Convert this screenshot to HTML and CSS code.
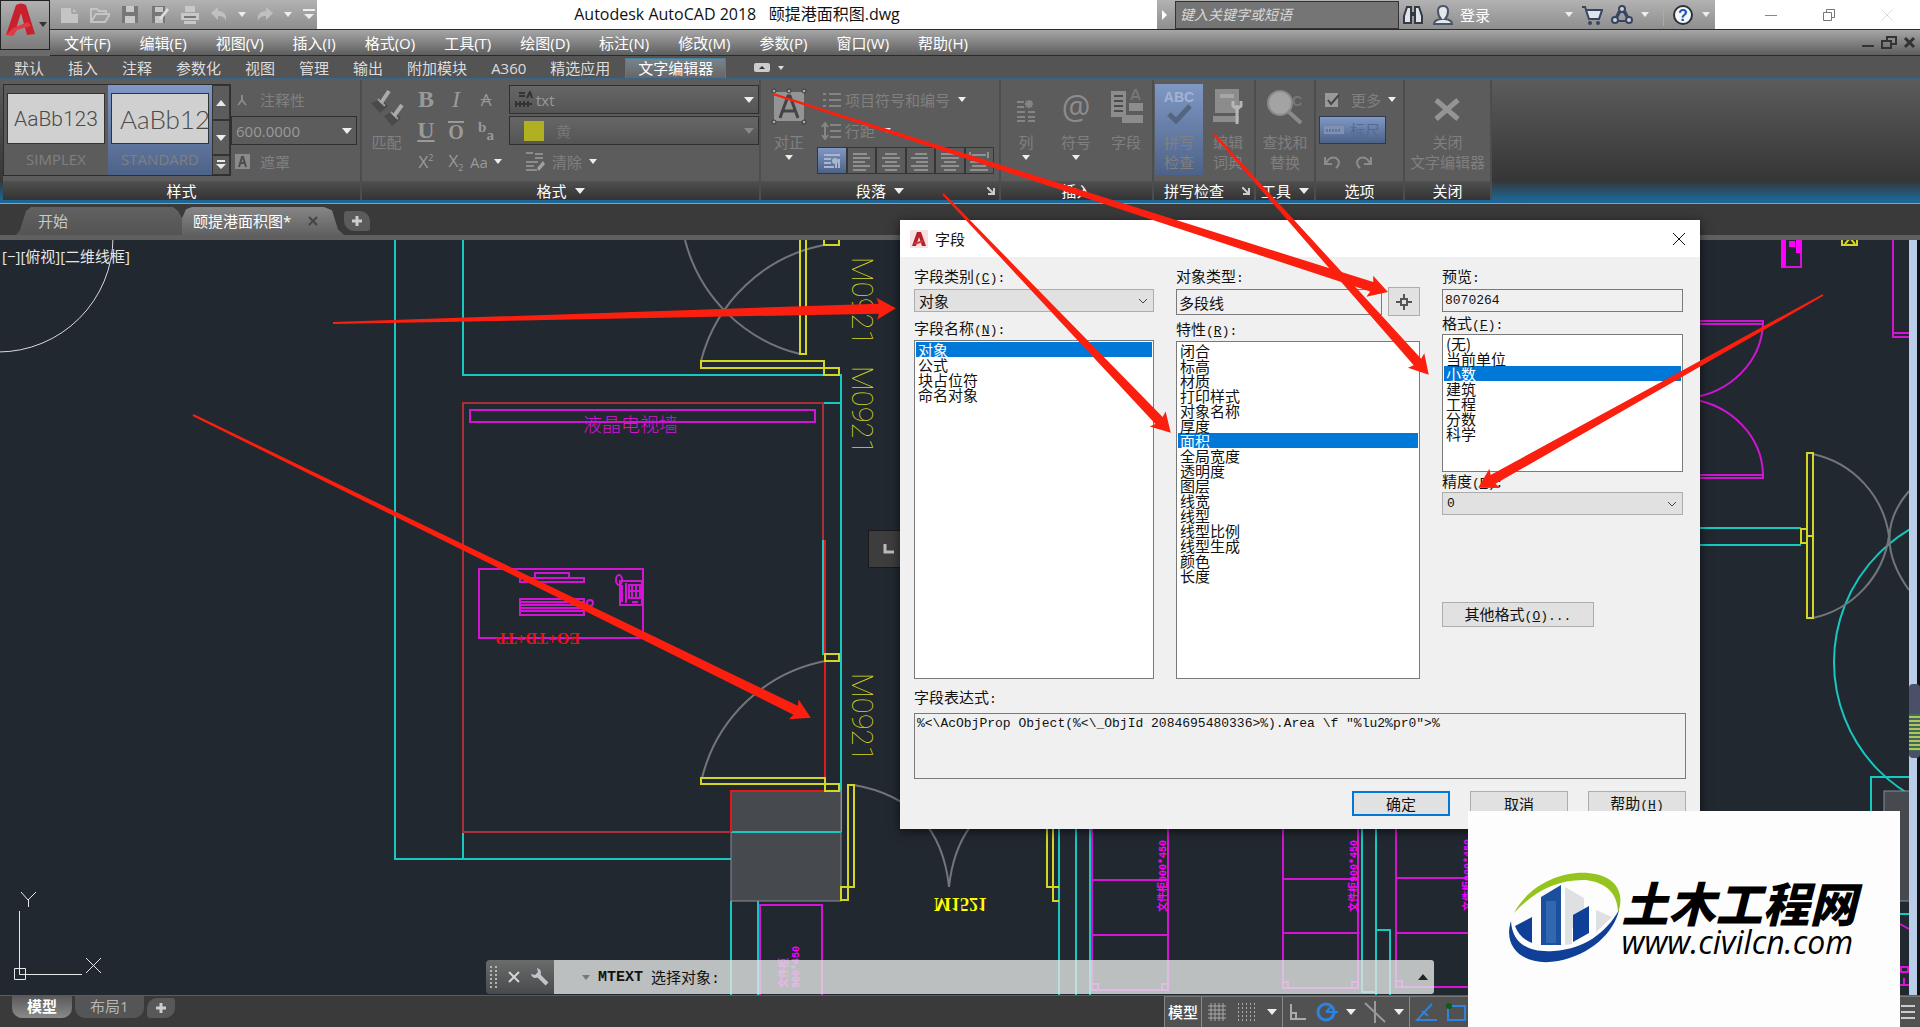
FILE: index.html
```html
<!DOCTYPE html>
<html lang="zh-CN">
<head>
  <meta charset="UTF-8" />
  <meta name="viewport" content="width=device-width, initial-scale=1.0"/>
  <title>Autodesk AutoCAD 2018 颐提港面积图.dwg</title>
  <link rel="stylesheet" href="styles.css">
</head>
<body>
  <header class="top">
    <button class="app-button" aria-label="应用程序菜单">
      <svg width="48" height="48" viewBox="0 0 48 48">
        <path d="M5 34 L15 4 Q20 1 25 4 L34 33 L26 34 L20 12 L13 34 Z" fill="#c8202c"/>
        <path d="M5 34 L12 27 L27 21 L30 25 L16 29 L12 35 Z" fill="#e23a44"/>
        <path d="M38 21h8l-4 5z" fill="#333"/>
      </svg>
    </button>
    <div class="top-rows">
      <div class="titlebar">
        <div class="quick">
          <button aria-label="新建"><svg width="20" height="20"><path d="M1 3h11l6 5v10H1z" fill="#c4c4c4"/><path d="M12 3v5h6" fill="none" stroke="#8a8a8a"/></svg></button>
          <button aria-label="打开"><svg width="20" height="20"><path d="M1 17V4h6l2 2h7v4M1 17l5-8h14l-5 8z" fill="none" stroke="#c4c4c4" stroke-width="2"/></svg></button>
          <button aria-label="保存"><svg width="20" height="20"><path d="M2 1h16v17H2z" fill="#777"/><path d="M6 1h8v6H6zM5 11h10v7H5z" fill="#c8c8c8"/></svg></button>
          <button aria-label="另存为"><svg width="20" height="20"><path d="M2 1h13v17H2z" fill="#777"/><path d="M5 2h8v5H5zM5 11h8v7H5z" fill="#c8c8c8"/><path d="M9 13l8-10 2 2-8 10z" fill="#ddd"/></svg></button>
          <button aria-label="打印"><svg width="20" height="20"><path d="M5 1h10v6H5zM1 8h18v7H1zM4 16h12v3H4z" fill="#c8c8c8"/><path d="M4 12h12" stroke="#777" stroke-width="2"/></svg></button>
          <button aria-label="放弃"><svg width="18" height="20"><path d="M1 8l7-6v4c6 0 9 4 8 10-1-4-4-5-8-5v4z" fill="#c0c0c0"/></svg></button>
          <i class="caret"></i>
          <button aria-label="重做"><svg width="18" height="20"><path d="M17 8l-7-6v4C4 6 1 10 2 16c1-4 4-5 8-5v4z" fill="#c0c0c0"/></svg></button>
          <i class="caret"></i>
          <button aria-label="自定义"><svg width="14" height="16"><path d="M1 2h12v2H1zM2 7h10l-5 5z" fill="#eee"/></svg></button>
        </div>
        <h1>Autodesk AutoCAD 2018&nbsp;&nbsp; 颐提港面积图.dwg</h1>
        <div class="infocenter">
          <i class="caret-right"></i>
          <input type="text" placeholder="键入关键字或短语" aria-label="搜索">
          <button aria-label="查找"><svg width="22" height="22"><path d="M2 12l3-9h4v16H2zM20 12l-3-9h-4v16h7z" fill="#dfe5ea" stroke="#333a44" stroke-width="2"/><path d="M9 8h4v4H9z" fill="#333a44"/></svg></button>
          <button class="login"><svg width="22" height="22"><path d="M2 20q0-4 7-5-3-3-3-8 0-5 5-5t5 5q0 5-3 8 7 1 7 5z" fill="#e4e9f0" stroke="#4b5465" stroke-width="2"/></svg>登录</button>
          <i class="caret"></i>
          <button aria-label="商店"><svg width="22" height="22"><path d="M1 3h3l4 12h10l3-9H6" fill="#dfe5ef" stroke="#39455f" stroke-width="2"/><circle cx="9" cy="19" r="2" fill="#39455f"/><circle cx="17" cy="19" r="2" fill="#39455f"/></svg></button>
          <button aria-label="保持连接"><svg width="22" height="22"><path d="M11 5L4 17h14z" fill="none" stroke="#39455f" stroke-width="2"/><g fill="#c9d2e2" stroke="#39455f" stroke-width="2"><path d="M8 7L5 13M14 7l3 6M8 17h6"/><circle cx="11" cy="5" r="3"/><circle cx="4" cy="16" r="3"/><circle cx="18" cy="16" r="3"/></g></svg></button>
          <i class="caret"></i>
          <span class="divider"></span>
          <button aria-label="帮助"><svg width="22" height="22"><circle cx="11" cy="11" r="9" fill="#f5f7fb" stroke="#2b3038" stroke-width="2"/><text x="11" y="17" text-anchor="middle" class="help-mark">?</text></svg></button>
          <i class="caret"></i>
        </div>
        <div class="window-buttons">
          <button aria-label="最小化"><svg width="14" height="14"><path d="M1 7.5h12" stroke="#888"/></svg></button>
          <button aria-label="还原"><svg width="14" height="14"><path d="M1.5 4.5h8v8h-8zM4.500 4v-2.500h8v8H10" fill="none" stroke="#777"/></svg></button>
          <button aria-label="关闭"><svg width="14" height="14"><path d="M1 1l12 12M13 1L1 13" stroke="#ddd"/></svg></button>
        </div>
      </div>
      <nav class="menubar">
        <a href="#">文件(F)</a>
        <a href="#">编辑(E)</a>
        <a href="#">视图(V)</a>
        <a href="#">插入(I)</a>
        <a href="#">格式(O)</a>
        <a href="#">工具(T)</a>
        <a href="#">绘图(D)</a>
        <a href="#">标注(N)</a>
        <a href="#">修改(M)</a>
        <a href="#">参数(P)</a>
        <a href="#">窗口(W)</a>
        <a href="#">帮助(H)</a>
        <svg class="doc-buttons" width="56" height="18"><path d="M2 12h12" stroke="#333" stroke-width="2"/><path d="M22 7h9v7h-9zM27 7V3h9v7h-5" fill="none" stroke="#333" stroke-width="2"/><path d="M45 4l9 9M54 4l-9 9" stroke="#333" stroke-width="3"/></svg>
      </nav>
    </div>
  </header>

  <nav class="ribbon-tabs">
    <a href="#">默认</a>
    <a href="#">插入</a>
    <a href="#">注释</a>
    <a href="#">参数化</a>
    <a href="#">视图</a>
    <a href="#">管理</a>
    <a href="#">输出</a>
    <a href="#">附加模块</a>
    <a href="#">A360</a>
    <a href="#">精选应用</a>
    <a href="#" class="active">文字编辑器</a>
    <button class="ribbon-toggle" aria-label="最小化功能区"><svg width="32" height="12"><rect width="16" height="9" y="1" rx="2" fill="#ccc"/><path d="M5 7h6L8 4z" fill="#333"/><path d="M24 4h6l-3 4z" fill="#ddd"/></svg></button>
  </nav>

  <section class="ribbon">
    <div class="panel style-panel">
      <div class="panel-body">
        <div class="gallery">
          <button class="cell"><span class="sample">AaBb123</span>SIMPLEX</button>
          <button class="cell selected"><span class="sample wide">AaBb123</span>STANDARD</button>
          <div class="gallery-scroll">
            <button aria-label="上"><svg width="10" height="6"><path d="M0 6h10L5 0z" fill="#e8e8e8"/></svg></button>
            <button aria-label="下"><i class="caret big"></i></button>
            <button aria-label="展开"><svg width="10" height="10"><path d="M1 0h8v2H1zM0 4h10L5 9z" fill="#e8e8e8"/></svg></button>
          </div>
        </div>
        <div class="rows">
          <div class="row"><svg width="22" height="16"><path d="M11 3v5M11 8l-4 5M11 8l4 5" stroke="#8a8a8a" stroke-width="2"/></svg>注释性</div>
          <div class="row"><span class="combo">600.0000<i class="caret big"></i></span></div>
          <div class="row"><svg width="22" height="18"><rect x="4" y="1" width="15" height="15" fill="#8a8a8a"/><path d="M8 14l3-10h1l3 10M9 10h5" stroke="#4c4c4c" stroke-width="2" fill="none"/></svg>遮罩</div>
        </div>
      </div>
      <h2>样式</h2>
    </div>

    <div class="panel format-panel">
      <div class="panel-body">
        <button class="large"><svg width="36" height="38"><path d="M2 15l9 10 8-7-7-7zM15 28l8 10 9-8-8-7z" fill="#4a4a4a"/><path d="M9 11l7 7M22 24l7 7" stroke="#999" stroke-width="2"/><path d="M12 15l8-12M25 28l8-11" stroke="#aaa" stroke-width="4"/></svg>匹配</button>
        <div class="glyphs">
          <b>B</b><em>I</em><s>A</s>
          <u>U</u><span class="over">O</span><span class="frac"><b>b</b><b>a</b></span>
          <span>X<sup>2</sup></span><span>X<sub>2</sub></span><span class="case">Aa<i class="caret"></i></span>
        </div>
        <div class="rows grow">
          <div class="row"><span class="combo font-combo"><svg width="20" height="18"><path d="M5 2h6M5 5h6M13 7l3-6 2 6M2 10v6M6 10v6M10 10v6M2 13h16M14 10v6" stroke="#333" stroke-width="2" fill="none"/></svg>txt<i class="caret big"></i></span></div>
          <div class="row"><span class="combo dim"><i class="swatch"></i>黄<i class="caret big"></i></span></div>
          <div class="row clear"><svg width="20" height="20"><path d="M1 1h7M10 2h8M10 6h8M1 10h12M1 14h8M1 18h11" stroke="#8c8c8c" stroke-width="2"/><path d="M12 16l6-7 2 3-6 7z" fill="#a0a0a0"/></svg>清除<i class="caret"></i></div>
        </div>
      </div>
      <h2>格式<i class="caret big"></i></h2>
    </div>

    <div class="panel para-panel">
      <div class="panel-body">
        <button class="large"><svg width="36" height="38"><rect x="3" y="4" width="30" height="29" fill="#949494"/><path d="M9 30L17 8h2l8 22M12 23h12" stroke="#444" stroke-width="3" fill="none"/><g fill="#aaa" stroke="#333"><circle cx="3" cy="3" r="2"/><circle cx="18" cy="3" r="2"/><circle cx="33" cy="3" r="2"/><circle cx="3" cy="34" r="2"/><circle cx="33" cy="34" r="2"/></g></svg>对正<i class="caret"></i></button>
        <div class="rows grow">
          <div class="row tight"><svg width="28" height="16"><path d="M6 2h3M6 8h3M6 14h3M12 2h12M12 8h12M12 14h12" stroke="#858585" stroke-width="2"/></svg>项目符号和编号<i class="caret"></i></div>
          <div class="row tight"><svg width="28" height="18"><path d="M8 3v12M5 5l3-4 3 4M5 13l3 4 3-4M13 3h11M13 9h11M13 15h11" stroke="#858585" stroke-width="2" fill="none"/></svg>行距<i class="caret"></i></div>
          <div class="align-buttons">
            <button class="selected" aria-label="默认"><svg width="20" height="20"><path d="M2 4h16M2 8h7M2 12h7M2 16h10M14 8v9M17 8v9" stroke="#a9b6cc" stroke-width="2"/><circle cx="13" cy="10" r="3" fill="#a9b6cc"/></svg></button>
            <button aria-label="左对齐"><svg width="20" height="20"><path d="M2 3h14M2 7h17M2 11h12M2 15h17M2 19h13" stroke="#909090" stroke-width="2"/></svg></button>
            <button aria-label="居中"><svg width="20" height="20"><path d="M4 3h12M1 7h18M4 11h12M1 15h18M4 19h12" stroke="#909090" stroke-width="2"/></svg></button>
            <button aria-label="右对齐"><svg width="20" height="20"><path d="M5 3h12M1 7h17M6 11h12M1 15h17M4 19h14" stroke="#909090" stroke-width="2"/></svg></button>
            <button aria-label="对正"><svg width="20" height="20"><path d="M1 3h18M1 7h18M4 11h12M1 15h18M4 19h12" stroke="#909090" stroke-width="2"/></svg></button>
            <button aria-label="分散对齐"><svg width="20" height="20"><path d="M1 1v6M19 1v6M3 4h14M1 11h18M3 15h14M1 19h18" stroke="#909090" stroke-width="2"/></svg></button>
          </div>
        </div>
      </div>
      <h2>段落<i class="caret big"></i><svg class="launcher" width="8" height="8"><path d="M0 0l6 6M7 1v6H1" stroke="#ccc" fill="none" stroke-width="2"/></svg></h2>
    </div>

    <div class="panel insert-panel">
      <div class="panel-body">
        <button class="large"><svg width="20" height="42"><path d="M1 14h7M1 19h7M1 24h8M12 24h7M1 29h8M12 29h7M1 33h8M12 33h7" stroke="#858585" stroke-width="2"/><path d="M13 12v8M9 16h8M10 13l6 6M16 13l-6 6" stroke="#858585" stroke-width="2"/></svg>列<i class="caret"></i></button>
        <button class="large"><span class="at">@</span>符号<i class="caret"></i></button>
        <button class="large"><svg width="36" height="36"><path d="M3 3h15v26H3zM21 15h14v8H21zM14 27h21v8H14z" fill="#8c8c8c"/><path d="M6 8h9M6 13h9M6 18h9M6 23h9" stroke="#4c4c4c" stroke-width="2"/><path d="M23 12l4-10h1l4 10M24 9h7" stroke="#777" stroke-width="2" fill="none"/></svg>字段</button>
      </div>
      <h2>插入</h2>
    </div>

    <div class="panel spell-panel">
      <div class="panel-body">
        <button class="large selected"><svg width="38" height="38"><text x="19" y="14" text-anchor="middle" class="abc">ABC</text><path d="M9 26l7 7 14-15" fill="none" stroke="#55657f" stroke-width="5"/></svg>拼写<br>检查</button>
        <button class="large"><svg width="36" height="38"><path d="M5 1h24v24H5zM3 28h26v6H3z" fill="#8c8c8c"/><path d="M10 8h14" stroke="#a6a6a6" stroke-width="4"/><path d="M27 17v19M23 13v5l4 3 4-3v-5" stroke="#b5b5b5" stroke-width="3" fill="none"/></svg>编辑<br>词典</button>
      </div>
      <h2>拼写检查<svg class="launcher" width="8" height="8"><path d="M0 0l6 6M7 1v6H1" stroke="#ccc" fill="none" stroke-width="2"/></svg></h2>
    </div>

    <div class="panel tools-panel">
      <div class="panel-body">
        <button class="large"><svg width="38" height="38"><text x="26" y="18" text-anchor="middle" class="abc dark">BC</text><circle cx="14" cy="15" r="12" fill="#a3a3a3" stroke="#8a8a8a" stroke-width="2"/><path d="M23 24l12 11" stroke="#8a8a8a" stroke-width="4"/></svg>查找和<br>替换</button>
      </div>
      <h2>工具<i class="caret big"></i></h2>
    </div>

    <div class="panel option-panel">
      <div class="panel-body rows">
        <div class="row"><svg width="26" height="18"><rect x="7" y="2" width="13" height="14" fill="#999"/><path d="M10 9l3 4 8-9" fill="none" stroke="#444" stroke-width="2"/></svg>更多<i class="caret"></i></div>
        <button class="ruler"><svg width="24" height="10"><rect x="2" y="1" width="20" height="8" fill="#8092b3"/><path d="M5 4v3M8 4v3M11 4v3M14 4v3M17 4v3" stroke="#4c5b77"/></svg>标尺</button>
        <div class="row undo"><svg width="18" height="14"><path d="M1 2v7h7M2 8q4-7 10-5 6 4 0 10" fill="none" stroke="#8c8c8c" stroke-width="2"/></svg><svg width="18" height="14"><path d="M17 2v7h-7M16 8q-4-7-10-5-6 4 0 10" fill="none" stroke="#8c8c8c" stroke-width="2"/></svg></div>
      </div>
      <h2>选项</h2>
    </div>

    <div class="panel close-panel">
      <div class="panel-body">
        <button class="large"><svg width="30" height="42"><path d="M3 12l22 19M25 12L3 31" stroke="#949494" stroke-width="5"/></svg>关闭<br>文字编辑器</button>
      </div>
      <h2>关闭</h2>
    </div>
  </section>

  <nav class="file-tabs">
    <a href="#" class="file-tab">开始</a>
    <a href="#" class="file-tab active">颐提港面积图*<svg width="10" height="10"><path d="M1 1l8 8M9 1L1 9" stroke="#444" stroke-width="2"/></svg></a>
    <button class="new-tab" aria-label="新图形"><svg width="12" height="12"><path d="M6 1v10M1 6h10" stroke="#ccc" stroke-width="3"/></svg></button>
  </nav>

  <main class="canvas">
    <svg class="drawing" width="100%" height="100%" fill="none">
      <g transform="translate(0 -240)">
        <!-- left wall and compass -->
        <circle cx="-2" cy="237" r="115" stroke="#d8dadc"/>
        <g stroke="#16c8c0" stroke-width="2">
          <path d="M395 240V859H731M463 240V375H841V832M463 832V859M824 403H841M823 540V655M731 901V996M758 901V996"/>
          <path d="M1059 820V996M1076 820V996M1090 820V996M1362 820V992H1376M1376 820V996M1376 930H1390V996"/>
          <path d="M1690 528H1801M1690 545H1801M1909 777H1871V900M1900 914H1909"/>
          <circle cx="1988" cy="662" r="154"/>
        </g>
        <!-- columns -->
        <rect x="731" y="791" width="110" height="110" fill="#46494d" stroke="#8a8e98"/>
        <rect x="1884" y="791" width="30" height="110" fill="#46494d" stroke="#8a8e98"/>
        <path d="M731 832H841" stroke="#16c8c0" stroke-width="2"/>
        <!-- area polyline -->
        <path d="M731 832H463V403H823V540" stroke="#a83038" stroke-width="2"/>
        <path d="M825 540V791H731V832" stroke="#e01a1a" stroke-width="2"/>
        <!-- door swings -->
        <g stroke="#72757a" stroke-width="2">
          <path d="M685 240A158 158 0 0 0 800 354M701 361A158 158 0 0 1 824 245M702 778A158 158 0 0 1 825 661"/>
          <path d="M854 785Q940 800 949 887Q958 800 1044 785"/>
          <path d="M1813 454A98 98 0 0 1 1889 536A98 98 0 0 1 1813 618M1909 491Q1870 536 1909 590"/>
        </g>
        <g stroke="#d3d622" stroke-width="2">
          <path d="M800 240V354H806V240M824 240V245H839V240M701 361H824V368H701ZM824 368H839V375H824Z"/>
          <path d="M825 654H839V661H825ZM701 778H825V784H701ZM825 784H839V791H825ZM848 785H854V887H841V900H848Z"/>
          <path d="M1047 820V887H1059M1053 820V901H1059M1807 453H1813V618H1807ZM1801 529H1807V543H1801ZM1807 536H1813"/>
          <path d="M1842 236V245H1857V236M1845 244L1850 238L1855 244"/>
        </g>
        <g stroke="#d414d4" stroke-width="2">
          <path d="M470 410H815V422H470ZM479 569H643V638H479ZM535 573H569V578H535ZM520 578H584V582H520Z"/>
          <path d="M520 599H584V615H520ZM520 602H584M520 605H584M520 608H584M520 611H584"/>
          <circle cx="590" cy="603" r="3"/>
          <path d="M620 581H642V605H620ZM629 585H640V598H629ZM632 585V598M636 585V598M629 591H640M622 585V602M626 583V603M632 602H638"/>
          <ellipse cx="619" cy="580" rx="3" ry="5"/>
          <path d="M760 996V905H822V996"/>
          <path d="M1092 820V990H1168V820M1092 880H1168M1092 935H1168M1283 820V988H1358V820M1283 879H1358M1283 933H1358M1480 878H1396V820M1396 878V987H1480M1396 933H1480"/>
          <path d="M1092 984h6v6M1162 990v-6h6M1283 982h5v6M1352 988v-6h6M1396 981h6v6"/>
          <path d="M1690 321H1763V324H1690M1763 324A85 78 0 0 1 1690 398M1690 399A85 78 0 0 1 1763 475M1690 475H1763V478H1690"/>
          <path d="M1893 240V337H1909M1893 333H1909M1782 240V267H1801V240"/>
          <path d="M1900 924L1909 929M1901 967H1908V972H1901ZM1900 985H1909M1904 978V985"/>
        </g>
        <path d="M1781 240h5v27h-5zM1789 241h6v6h-6zM1796 240h6v13h-6z" fill="#f0f"/>
        <!-- labels -->
        <g class="door-label" fill="#d3d622">
          <text transform="translate(852 257) rotate(90)">M0921</text>
          <text transform="translate(852 366) rotate(90)">M0921</text>
          <text transform="translate(852 673) rotate(90)">M0921</text>
        </g>
        <text x="583" y="432" class="wall-label">液晶电视墙</text>
        <text transform="translate(580 633) rotate(180)" class="desk-label">EO+TD+TP</text>
        <text transform="translate(934 898) scale(1 -1)" class="door-small">M1521</text>
        <g class="cabinet">
          <text transform="translate(1166 912) rotate(-90)">文件柜900*450</text>
          <text transform="translate(1357 912) rotate(-90)">文件柜900*450</text>
          <text transform="translate(1471 911) rotate(-90)">文件柜900*450</text>
          <text transform="translate(787 988) rotate(-90)">文件柜</text>
          <text transform="translate(799 988) rotate(-90)">900*450</text>
        </g>
        <!-- UCS icon -->
        <g stroke="#e6e8ea">
          <path d="M19.500 911V974.500H82M14.500 968.500h11v11h-11zM21 892l7 8 8-8M28.500 900v7M86 958l15 15M101 958l-15 15"/>
        </g>
      </g>
    </svg>
    <p class="view-label">[−][俯视][二维线框]</p>
    <div class="nav-strip"><span></span></div>
    <div class="snap-tip"><svg width="12" height="12"><path d="M2 1v8h9" stroke="#bbb" stroke-width="3" fill="none"/></svg></div>
    <div class="command">
      <div class="command-grip">
        <svg width="8" height="22"><path d="M1 0v22M6 0v22" stroke="#b5b5b5" stroke-width="2" stroke-dasharray="2 2"/></svg>
        <svg width="12" height="12"><path d="M1 1l10 10M11 1L1 11" stroke="#d5d5d5" stroke-width="2"/></svg>
        <svg width="20" height="20"><path d="M7 7l10 10" stroke="#c3c3cc" stroke-width="4"/><path d="M7 1a5 5 0 1 1-6 6l4 1 3-3z" fill="#c3c3cc"/></svg>
      </div>
      <div class="command-line">
        <i class="caret dark"></i><b>MTEXT</b><span>选择对象:</span>
        <svg width="10" height="6"><path d="M0 6h10L5 0z" fill="#222"/></svg>
      </div>
    </div>
  </main>

  <footer class="bottom">
    <nav class="layout-tabs">
      <a href="#" class="active">模型</a>
      <a href="#">布局1</a>
      <button aria-label="新建布局"><svg width="12" height="12"><path d="M6 1v10M1 6h10" stroke="#ccc" stroke-width="3"/></svg></button>
    </nav>
    <div class="status">
      <button class="status-model">模型</button>
      <div class="status-group">
        <button aria-label="栅格"><svg width="20" height="20"><path d="M4 1v18M8 1v18M12 1v18M16 1v18M1 4h18M1 8h18M1 12h18M1 16h18" stroke="#aaa"/></svg></button>
        <button aria-label="捕捉"><svg width="20" height="20"><path d="M1 2h18M1 6h18M1 10h18M1 14h18M1 18h18" stroke="#aaa" stroke-width="2" stroke-dasharray="1 3"/></svg></button>
        <i class="caret big"></i>
      </div>
      <div class="status-group">
        <button aria-label="正交"><svg width="20" height="20"><path d="M3 2v15h15M3 11h5v6" stroke="#aaa" fill="none" stroke-width="2"/></svg></button>
        <button aria-label="极轴"><svg width="22" height="20"><circle cx="10" cy="10" r="8" fill="none" stroke="#2d83dd" stroke-width="3"/><path d="M10 10h12M10 10l6-6" stroke="#2d83dd" stroke-width="2"/></svg></button>
        <i class="caret big"></i>
        <button aria-label="等轴测"><svg width="22" height="22"><path d="M11 0v22M1 2l20 19" stroke="#999" stroke-width="2"/></svg></button>
        <i class="caret big"></i>
      </div>
      <div class="status-group">
        <button aria-label="对象捕捉追踪"><svg width="22" height="20"><path d="M17 2L2 18h20M7 9l6 5" stroke="#2d83dd" stroke-width="2" fill="none"/></svg></button>
        <button aria-label="对象捕捉"><svg width="22" height="20"><path d="M3 4h17v14H3z" stroke="#2d83dd" stroke-width="2" fill="none"/><circle cx="4" cy="4" r="3" fill="#0b5d14"/></svg></button>
      </div>
      <button class="burger" aria-label="自定义"><svg width="14" height="16"><path d="M0 2h14M0 8h14M0 14h14" stroke="#ccc" stroke-width="2"/></svg></button>
    </div>
  </footer>

  <form class="dialog">
    <div class="dialog-title">
      <svg width="18" height="18"><rect width="18" height="18" fill="#f6e2e0"/><path d="M2 16L7 2h4l5 14h-4l-3-9-3 9z" fill="#b3202b"/><path d="M4 13l9-3v2l-8 3z" fill="#d83a44"/></svg>
      字段
      <button type="button" aria-label="关闭"><svg width="14" height="14"><path d="M1 1l12 12M13 1L1 13" stroke="#111"/></svg></button>
    </div>
    <div class="dialog-body">
      <div class="columns">
        <div class="column">
          <label for="category">字段类别<span>(<u>C</u>):</span></label>
          <select id="category" class="drop"><option>对象</option></select>
          <label for="names" class="second">字段名称<span>(<u>N</u>):</span></label>
          <select id="names" class="list" size="4">
            <option selected>对象</option>
            <option>公式</option>
            <option>块占位符</option>
            <option>命名对象</option>
          </select>
        </div>
        <div class="column">
          <label for="type">对象类型<span>:</span></label>
          <div class="pick">
            <input id="type" type="text" value="多段线" readonly>
            <button type="button" aria-label="选择对象"><svg width="18" height="18"><path d="M9 1v5M9 12v5M1 9h5M12 9h5M6 6h6v6H6z" stroke="#555" stroke-width="2" fill="none"/></svg></button>
          </div>
          <label for="props">特性<span>(<u>R</u>):</span></label>
          <select id="props" class="list" size="16">
            <option>闭合</option>
            <option>标高</option>
            <option>材质</option>
            <option>打印样式</option>
            <option>对象名称</option>
            <option>厚度</option>
            <option selected>面积</option>
            <option>全局宽度</option>
            <option>透明度</option>
            <option>图层</option>
            <option>线宽</option>
            <option>线型</option>
            <option>线型比例</option>
            <option>线型生成</option>
            <option>颜色</option>
            <option>长度</option>
          </select>
        </div>
        <div class="column">
          <label for="preview">预览<span>:</span></label>
          <input id="preview" class="mono" type="text" value="8070264" readonly>
          <label for="format">格式<span>(<u>F</u>):</span></label>
          <select id="format" class="list short" size="7">
            <option>(无)</option>
            <option>当前单位</option>
            <option selected>小数</option>
            <option>建筑</option>
            <option>工程</option>
            <option>分数</option>
            <option>科学</option>
          </select>
          <label for="precision">精度<span>(<u>P</u>):</span></label>
          <select id="precision" class="drop mono"><option>0</option></select>
          <button type="button" class="other">其他格式<span>(<u>O</u>)...</span></button>
        </div>
      </div>
      <label for="expression" class="expression-label">字段表达式<span>:</span></label>
      <textarea id="expression" class="mono" readonly>%&lt;\AcObjProp Object(%&lt;\_ObjId 2084695480336&gt;%).Area \f "%lu2%pr0"&gt;%</textarea>
      <div class="actions">
        <button type="button" class="primary">确定</button>
        <button type="button">取消</button>
        <button type="button">帮助<span>(<u>H</u>)</span></button>
      </div>
    </div>
  </form>

  <svg class="arrows" width="100%" height="100%" fill="#fb1f10">
    <polygon transform="translate(333 323) rotate(-1.500)" points="0,-1 546,-5 544,-11 563,0 544,11 546,5 0,1"/>
    <polygon transform="translate(193 415) rotate(26.100)" points="0,-1 671,-5 669,-11 688,0 669,11 671,5 0,1"/>
    <polygon transform="translate(773 94) rotate(17.850)" points="0,-1 629,-5 627,-11 646,0 627,11 629,5 0,1"/>
    <polygon transform="translate(943 194) rotate(46.350)" points="0,-1 313,-5 311,-11 330,0 311,11 313,5 0,1"/>
    <polygon transform="translate(1213 133) rotate(48.250)" points="0,-1 307,-5 305,-11 324,0 305,11 307,5 0,1"/>
    <polygon transform="translate(1823 295) rotate(150.800)" points="0,-1 378,-5 376,-11 395,0 376,11 378,5 0,1"/>
  </svg>

  <aside class="watermark">
    <svg width="116" height="96" viewBox="0 0 116 96">
      <path d="M8 42C22 16 52 0 82 2C108 4 120 20 112 42C112 24 102 12 80 9C52 8 28 20 8 42Z" fill="#96c41f"/>
      <path d="M5 50C-4 78 20 96 52 90C84 84 108 62 113 39C100 62 78 78 48 80C22 82 6 72 5 50Z" fill="#0f3f96"/>
      <path d="M59 16l19 11v26l-12 4v16l-7 1zM90 39l16 7-16 15z" fill="#dfe0e2"/>
      <path d="M35 26l20-12v60H35z" fill="#1d4f9f"/>
      <path d="M67 44l16-9v27l-16 9zM9 55l17-9v26c-8-3-14-9-17-17z" fill="#0f3f96"/>
      <path d="M40 30h10v42H40z" fill="#4a7fc0" opacity=".5"/>
    </svg>
    <div class="brand"><strong>土木工程网</strong><a href="#">www.civilcn.com</a></div>
  </aside>
</body>
</html>
```
FILE: styles.css
```css
* {
  box-sizing: border-box;
}

body {
  margin: 0;
  height: 100vh;
  display: flex;
  flex-direction: column;
  position: relative;
  overflow: hidden;
  background: #3a3a3a;
  color: #e6e6e6;
  font-family: "Open Sans", "Noto Sans CJK SC", sans-serif;
  font-size: 15px;
  line-height: 20px;
}

a {
  color: inherit;
  text-decoration: none;
}

button {
  padding: 0;
  border: none;
  background: none;
  color: inherit;
  font: inherit;
}

svg {
  display: block;
  flex: none;
}

.caret {
  flex: none;
  width: 0;
  height: 0;
  border: 4px solid transparent;
  border-top: 5px solid #eee;
  border-bottom: none;
}

.caret.big {
  border-width: 6px 5px 0;
}

.caret.dark {
  border-top-color: #777;
}

.caret-right {
  border: 5px solid transparent;
  border-left: 5px solid #fff;
  border-right: none;
}

/* title bar */
.top {
  display: flex;
  height: 56px;
  background: #6a6a6a;
}

.app-button {
  width: 50px;
  height: 50px;
  border: 1px solid #222;
  background: linear-gradient(#b0b0b0, #7c7c7c);
}

.top-rows {
  flex: 1;
  display: flex;
  flex-direction: column;
}

.titlebar {
  display: flex;
  height: 29px;
  background: #fff;
}

.quick,
.infocenter {
  display: flex;
  align-items: center;
  background: linear-gradient(#b2b2b2, #8e8e8e);
}

.quick {
  gap: 10px;
  width: 267px;
  padding-left: 10px;
}

.titlebar h1 {
  flex: 1;
  margin: 0;
  color: #111;
  font-size: 16px;
  font-weight: 400;
  line-height: 29px;
  text-align: center;
}

.infocenter {
  gap: 8px;
  width: 558px;
  padding: 0 5px;
}

.infocenter input {
  width: 224px;
  height: 28px;
  margin-right: -5px;
  padding: 0 4px;
  border: 1px solid #333;
  background: #757575;
  font: italic 14px "Open Sans", "Noto Sans CJK SC", sans-serif;
}

.infocenter input::placeholder {
  color: #d8d8d8;
}

.login {
  display: flex;
  gap: 6px;
  margin-right: auto;
  align-items: center;
  color: #fff;
}

.divider {
  width: 1px;
  height: 22px;
  margin-left: 6px;
  background: #aaa;
}

.help-mark {
  font: bold 16px "Liberation Sans", sans-serif;
  fill: #2450b0;
}

.window-buttons {
  display: flex;
  align-items: center;
  gap: 44px;
  width: 205px;
  padding-left: 49px;
}

.menubar {
  flex: 1;
  display: flex;
  align-items: center;
  gap: 29px;
  padding: 0 4px 0 14px;
  border: solid #2a2a2a;
  border-width: 1px 0;
  background: linear-gradient(#a6a6a6, #5e5e5e);
  color: #fff;
}

.doc-buttons {
  margin-left: auto;
}

/* ribbon */
.ribbon-tabs {
  display: flex;
  height: 23px;
  padding: 2px 2px 0;
  background: #545454;
  border-bottom: 1px solid #3b6484;
  color: #dcdcdc;
}

.ribbon-tabs a {
  padding: 0 12px;
}

.ribbon-tabs .active {
  margin-left: 3px;
  border: 1px solid #4a7fa0;
  border-bottom: none;
  background: linear-gradient(#77848b, #666);
  color: #fff;
  line-height: 18px;
}

.ribbon-toggle {
  margin-left: 28px;
}

.ribbon {
  display: flex;
  height: 125px;
  padding: 1px 0 3px 3px;
  border-bottom: 1px solid #72a7c9;
  background: linear-gradient(#5c5c5c, #363636 82%, #1d6796 98%);
}

.panel {
  flex: none;
  display: flex;
  flex-direction: column;
  border-right: 2px solid #4a4e50;
  background: #5c5c5c;
  color: #808080;
}

.panel h2 {
  position: relative;
  display: flex;
  align-items: center;
  justify-content: center;
  gap: 8px;
  height: 19px;
  margin: 0;
  background: linear-gradient(#505050, #333);
  color: #fff;
  font-size: 15px;
  font-weight: 400;
}

.panel-body {
  flex: 1;
  display: flex;
  padding-top: 4px;
}

.launcher {
  position: absolute;
  right: 4px;
  bottom: 5px;
}

.style-panel { width: 359px; }
.format-panel { width: 399px; }
.para-panel { width: 240px; }
.insert-panel { width: 153px; }
.spell-panel { width: 102px; }
.tools-panel { width: 60px; }
.option-panel { width: 89px; }
.close-panel { width: 87px; }

.spell-panel h2 {
  justify-content: flex-start;
  padding-left: 10px;
}

.gallery {
  display: flex;
  width: 228px;
  height: 92px;
  border: 1px solid #2e2e2e;
}

.cell {
  display: flex;
  flex-direction: column;
  align-items: center;
  gap: 5px;
  width: 104px;
  padding: 8px 2px 0;
}

.sample {
  width: 98px;
  height: 51px;
  overflow: hidden;
  border: 1px solid #333;
  background: #d0d0d0;
  color: #4a4a4a;
  font: 300 21px/50px Roboto, sans-serif;
}

.sample.wide {
  padding-left: 8px;
  font: 300 26px/50px Lato, sans-serif;
  text-align: left;
}

.cell.selected,
.align-buttons .selected,
.large.selected,
.ruler {
  background: linear-gradient(#7f98c4, #4d6288);
}

.gallery-scroll {
  flex: 1;
  display: grid;
  grid-template-rows: 35px 35px 1fr;
}

.gallery-scroll button {
  display: grid;
  place-items: center;
  border: 1px solid #333;
}

.rows {
  display: flex;
  flex-direction: column;
}

.grow {
  flex: 1;
}

.row {
  display: flex;
  align-items: center;
  height: 31px;
  gap: 7px;
}

.row.tight {
  gap: 0;
}

.row.tight .caret {
  margin-left: 8px;
}

.combo {
  display: flex;
  align-items: center;
  gap: 6px;
  width: 126px;
  height: 29px;
  padding: 0 4px;
  border: 1px solid #2f2f2f;
  color: #999;
}

.combo .caret {
  margin-left: auto;
}

.format-panel .combo {
  width: 250px;
  background: linear-gradient(#666, #555);
}

.format-panel .font-combo {
  gap: 2px;
}

.combo.dim {
  color: #777;
}

.combo.dim .caret {
  border-top-color: #888;
}

.swatch {
  width: 20px;
  height: 20px;
  margin: 0 6px 0 10px;
  background: #b0b022;
}

.clear {
  padding-left: 16px;
}

.large {
  display: flex;
  flex-direction: column;
  align-items: center;
  width: 50px;
  height: 91px;
  line-height: 20px;
}

.large svg,
.large .at {
  height: 42px;
  margin: 4px 0 2px;
}

.large .caret {
  margin-top: 3px;
}

.format-panel .large {
  flex: 1;
}

.glyphs {
  display: grid;
  grid-template-columns: repeat(3, 30px);
  grid-auto-rows: 31px;
  place-items: center;
  margin-right: 8px;
  color: #999;
  font-size: 17px;
}

.glyphs > b,
.glyphs > em,
.glyphs > u,
.over {
  font: bold 24px "Liberation Serif", serif;
}

.glyphs > em {
  font-style: italic;
  font-weight: 400;
}

.over {
  border-top: 2px solid #999;
  font-size: 20px;
  line-height: 18px;
}

.glyphs sup,
.glyphs sub {
  font-size: 9px;
  line-height: 9px;
}

.frac {
  display: flex;
  font: 15px/16px "Liberation Serif", serif;
}

.frac b:last-child {
  align-self: end;
  padding-top: 8px;
}

.case {
  display: flex;
  align-items: center;
  gap: 6px;
  font-size: 15px;
}

.para-panel .large {
  width: 56px;
}

.align-buttons {
  display: grid;
  grid-template-columns: repeat(6, 1fr);
  height: 27px;
  margin: 1px 5px 0 0;
}

.align-buttons button {
  display: grid;
  place-items: center;
  border: 1px solid #363636;
}

.at {
  font: 32px/38px "Open Sans", sans-serif;
  color: #8c8c8c;
}

.spell-panel .large {
  width: 48px;
  margin-left: 1px;
}

.abc {
  font: bold 14px "Liberation Sans", sans-serif;
  fill: #a3b4d2;
}

.abc.dark {
  fill: #777;
}

.tools-panel .large {
  width: 58px;
}

.close-panel .large {
  width: 86px;
}

.option-panel .row {
  padding-left: 2px;
}

.ruler {
  display: flex;
  align-items: center;
  gap: 4px;
  width: 67px;
  height: 28px;
  margin: 1px 3px 2px;
  padding-left: 2px;
  border: 1px solid #2d3b52;
  color: #566a90;
  white-space: nowrap;
}

.option-panel .undo {
  gap: 12px;
  padding-left: 8px;
}

/* drawing tabs */
.file-tabs {
  display: flex;
  align-items: flex-end;
  height: 36px;
  padding-left: 16px;
  border-bottom: 5px solid #5f5f5f;
}

.file-tab {
  display: flex;
  align-items: center;
  justify-content: space-between;
  width: 166px;
  height: 28px;
  padding: 0 22px;
  background: linear-gradient(#616161, #545454);
  clip-path: polygon(0 100%, 4px 82%, 10px 14%, 15px 0, calc(100% - 9px) 0, calc(100% - 4px) 14%, 100% 40%, 100% 100%);
  color: #c8c8c8;
}

.file-tab.active {
  width: 162px;
  padding: 0 26px 0 11px;
  background: linear-gradient(#868686, #616161);
  clip-path: polygon(0 100%, 0 40%, 4px 8%, 10px 0, calc(100% - 20px) 0, calc(100% - 12px) 12%, calc(100% - 6px) 80%, 100% 100%);
  color: #fff;
}

.new-tab {
  display: grid;
  place-items: center;
  width: 26px;
  height: 20px;
  margin-bottom: 4px;
  border-radius: 3px 10px 3px 10px;
  background: #5b5b5b;
}

/* drawing area */
.canvas {
  flex: 1;
  position: relative;
  min-height: 0;
  overflow: hidden;
  background: #212830;
}

.drawing {
  position: absolute;
  inset: 0;
}

.door-label {
  font: 100 29px Roboto, sans-serif;
}

.wall-label {
  fill: #d414d4;
  font: 300 19px "Noto Sans CJK SC", sans-serif;
}

.desk-label {
  fill: #f01010;
  font: bold 16px "Liberation Serif", serif;
}

.door-small {
  fill: #ff0;
  font: bold 18px "Liberation Serif", serif;
}

.cabinet {
  fill: #f0f;
  font: bold 10px "Liberation Mono", "Noto Sans CJK SC", monospace;
}

.view-label {
  position: relative;
  margin: 6px 2px;
  font-size: 15px;
}

.nav-strip {
  position: absolute;
  top: 0;
  right: 0;
  bottom: 0;
  width: 11px;
  border-right: 3px solid #111;
  background: #b9cde9;
}

.nav-strip span {
  position: absolute;
  top: 444px;
  left: 0;
  width: 11px;
  height: 74px;
  border-radius: 4px;
  background: linear-gradient(#4a5068 40%, transparent 40% 90%, #4a5068 90%), repeating-linear-gradient(#b3c25a 0 2px, #3f6a5c 2px 4px);
}

.snap-tip {
  position: absolute;
  top: 290px;
  left: 868px;
  width: 40px;
  height: 38px;
  padding: 12px 14px;
  border: 1px solid #1a1a1a;
  background: #3d3d3d;
}

.command {
  position: absolute;
  left: 486px;
  right: 486px;
  bottom: 1px;
  display: flex;
  height: 34px;
}

.command-grip {
  display: flex;
  align-items: center;
  gap: 10px;
  width: 68px;
  padding-left: 4px;
  border-radius: 4px 0 0 4px;
  background: linear-gradient(#6a6c6c, #484a4b);
}

.command-line {
  flex: 1;
  display: flex;
  align-items: center;
  gap: 8px;
  padding: 0 6px 0 28px;
  border-radius: 0 3px 3px 0;
  background: rgba(227, 229, 228, .8);
  color: #111;
  font: 15px "Liberation Mono", "Noto Sans CJK SC", monospace;
}

.command-line svg {
  margin-left: auto;
}

/* bottom bar */
.bottom {
  display: flex;
  height: 32px;
  border-top: 1px solid #5c5c5c;
}

.layout-tabs {
  display: flex;
  flex: 1;
  gap: 3px;
  padding-left: 12px;
}

.layout-tabs a {
  height: 22px;
  padding: 0 15px;
  border-radius: 0 0 10px 10px;
  background: #555;
  color: #b5b5b5;
}

.layout-tabs .active {
  background: linear-gradient(#5a5a5a, #8a8a8a);
  color: #fff;
  font-weight: 700;
}

.layout-tabs button {
  display: grid;
  place-items: center;
  width: 28px;
  height: 20px;
  margin-top: 2px;
  border-radius: 10px 3px 10px 3px;
  background: #585858;
}

.status {
  display: flex;
  width: 756px;
  border-top: 1px solid #777;
  background: #515151;
}

.status-model {
  width: 38px;
  border: solid #888;
  border-width: 0 1px;
  color: #fff;
  font-weight: 500;
}

.status-group {
  display: flex;
  align-items: center;
  gap: 10px;
  padding: 0 5px;
  border-right: 1px solid #888;
}

.status-group + .status-group {
  gap: 8px;
}

.burger {
  margin: 0 5px 0 auto;
}

/* field dialog */
.dialog {
  position: absolute;
  top: 220px;
  left: 900px;
  width: 800px;
  background: #f0f0f0;
  box-shadow: 0 2px 10px rgba(0, 0, 0, .6);
  color: #111;
  font: 15px/18px "Noto Sans CJK SC", sans-serif;
}

.dialog-title {
  display: flex;
  align-items: center;
  gap: 7px;
  height: 37px;
  padding: 0 14px 0 10px;
  background: #fff;
}

.dialog-title button {
  margin-left: auto;
}

.dialog-body {
  padding: 10px 14px 13px;
}

.dialog label {
  display: block;
  height: 20px;
}

.dialog label span,
.dialog-body button span {
  font: 13px "Liberation Mono", monospace;
}

.columns {
  display: grid;
  grid-template-columns: 240px 244px 241px;
  column-gap: 22px;
}

.column {
  display: flex;
  flex-direction: column;
  height: 412px;
}

.dialog input,
.dialog select,
.dialog textarea {
  width: 100%;
  margin: 0;
  padding: 0 2px;
  border: 1px solid #7a7a7a;
  border-radius: 0;
  background: #f0f0f0;
  color: #111;
  font: 15px/18px "Noto Sans CJK SC", sans-serif;
}

.dialog .mono {
  font: 13px/20px "Liberation Mono", monospace;
}

.dialog input {
  height: 23px;
  margin: 2px 0;
}

.dialog .drop {
  height: 23px;
  margin-top: 2px;
  padding: 0 4px;
  appearance: none;
  border-color: #adadad;
  background: #e1e1e1 url('data:image/svg+xml,<svg xmlns="http://www.w3.org/2000/svg" width="10" height="6"><path d="M1 1l4 4 4-4" fill="none" stroke="%23444"/></svg>') no-repeat right 5px center;
}

.dialog .drop.mono {
  margin-top: 0;
}

.second {
  margin-top: 7px;
}

.dialog .list {
  flex: 1;
  margin-top: 1px;
  padding: 1px;
  overflow: hidden;
  background: #fff;
}

.dialog .list.short {
  flex: none;
  height: 138px;
  margin-top: 0;
}

.list option {
  display: flex;
  align-items: center;
  min-height: 15px;
  height: 15px;
  padding: 0 2px;
}

.list option:checked {
  background: linear-gradient(#0078d7, #0078d7);
  -webkit-text-fill-color: #fff;
}

.pick {
  display: grid;
  grid-template-columns: 206px 32px;
  column-gap: 6px;
  height: 33px;
}

.dialog .pick input {
  height: 26px;
}

.dialog .pick button,
.other,
.actions button {
  border: 1px solid #adadad;
  background: #e1e1e1;
}

.pick button {
  display: grid;
  place-items: center;
  height: 29px;
}

.other {
  width: 152px;
  height: 25px;
  margin-top: 87px;
}

.dialog .expression-label {
  margin: 9px 0 5px;
}

.dialog textarea {
  display: block;
  height: 66px;
  resize: none;
}

.actions {
  display: flex;
  justify-content: flex-end;
  gap: 20px;
  margin-top: 12px;
}

.actions button {
  width: 98px;
  height: 25px;
}

.actions .primary {
  border: 2px solid #0078d7;
}

/* overlays */
.arrows {
  position: absolute;
  inset: 0;
  pointer-events: none;
}

.watermark {
  position: absolute;
  right: 20px;
  bottom: 0;
  display: flex;
  align-items: center;
  justify-content: center;
  width: 432px;
  height: 216px;
  padding-right: 6px;
  background: #fdfdfd;
  color: #000;
}

.brand {
  display: flex;
  flex-direction: column;
}

.brand strong {
  font: italic 900 47px/46px "Noto Sans CJK SC", sans-serif;
}

.brand a {
  font: italic 500 32px/34px "Open Sans", sans-serif;
}
```
